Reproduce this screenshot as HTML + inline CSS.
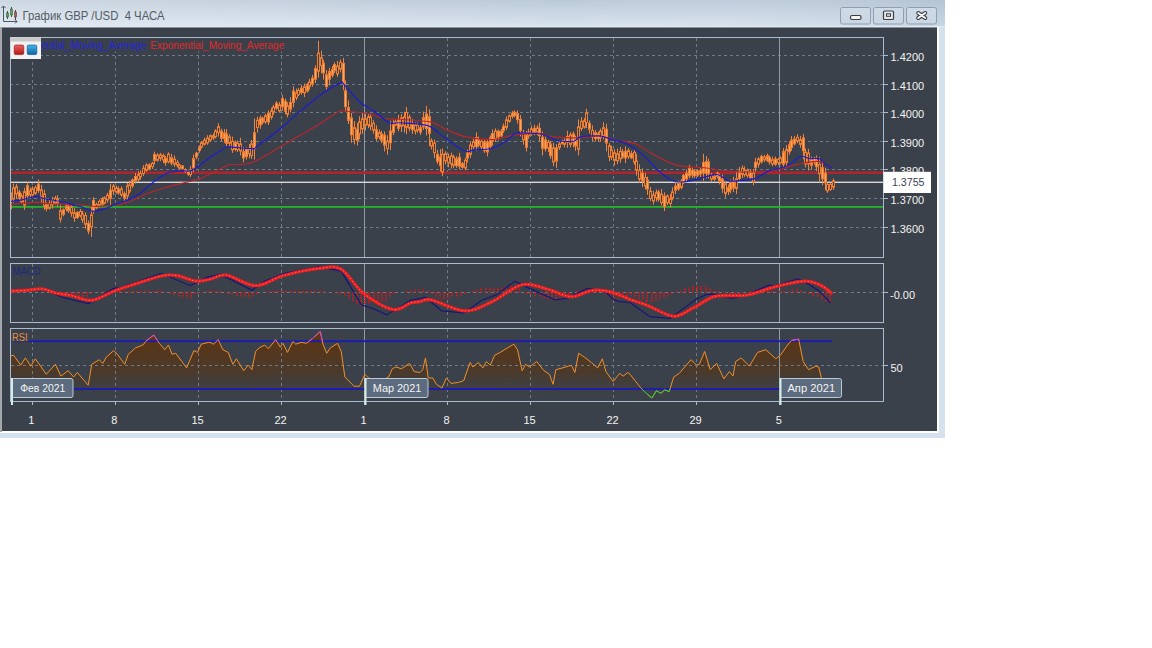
<!DOCTYPE html>
<html><head><meta charset="utf-8"><title>GBP/USD</title>
<style>
html,body{margin:0;padding:0;background:#fff;width:1152px;height:648px;overflow:hidden}
svg{position:absolute;left:0;top:0;display:block}
text{font-family:"Liberation Sans", sans-serif}
</style></head><body>
<svg width="1152" height="648" viewBox="0 0 1152 648">
<defs>
<linearGradient id="tb" x1="0" y1="0" x2="0" y2="1">
<stop offset="0" stop-color="#bccad8"/><stop offset="1" stop-color="#d8e3ef"/></linearGradient>
<linearGradient id="tbh" x1="0" y1="0" x2="1" y2="0">
<stop offset="0" stop-color="#ffffff" stop-opacity="0.25"/><stop offset="0.6" stop-color="#ffffff" stop-opacity="0"/><stop offset="1" stop-color="#9fb3c8" stop-opacity="0.25"/></linearGradient>
<linearGradient id="btn" x1="0" y1="0" x2="0" y2="1">
<stop offset="0" stop-color="#cfdbe7"/><stop offset="1" stop-color="#c9d6e3"/></linearGradient>
<linearGradient id="lr" x1="0" y1="0" x2="0" y2="1">
<stop offset="0" stop-color="#f06060"/><stop offset="1" stop-color="#b01818"/></linearGradient>
<linearGradient id="lb" x1="0" y1="0" x2="0" y2="1">
<stop offset="0" stop-color="#40b8f0"/><stop offset="1" stop-color="#1060a0"/></linearGradient>
<linearGradient id="rsif" gradientUnits="userSpaceOnUse" x1="0" y1="332" x2="0" y2="401">
<stop offset="0" stop-color="#5e3410"/><stop offset="0.6" stop-color="#4a3a2c"/><stop offset="1" stop-color="#3b414a" stop-opacity="0"/></linearGradient>
<clipPath id="cmain"><rect x="11" y="38" width="872" height="219"/></clipPath>
<clipPath id="cmacd"><rect x="11" y="264" width="872" height="58"/></clipPath>
<clipPath id="chi"><rect x="11" y="329" width="872" height="12"/></clipPath>
<clipPath id="clo"><rect x="11" y="389" width="872" height="12"/></clipPath>
<clipPath id="crsi"><rect x="11" y="329" width="872" height="72"/></clipPath>
</defs>

<rect x="0" y="0" width="945" height="438" fill="#d5e1ed"/>
<rect x="0" y="0" width="945" height="27" fill="url(#tb)"/>
<rect x="0" y="0" width="945" height="27" fill="url(#tbh)"/>
<rect x="0" y="26" width="945" height="1" fill="#e2e9f1"/>
<rect x="0" y="27" width="939" height="406" fill="#ffffff"/>
<rect x="0" y="27" width="2" height="405" fill="#a4a8ad"/>
<rect x="2" y="27" width="935" height="404" fill="#3b414a"/>
<rect x="2" y="27" width="935" height="1" fill="#8a9098"/>
<g stroke="#4a5866" fill="none" stroke-width="1">
<path d="M3.5,6 V21.5 H17"/><path d="M1.5,8 L3.5,6 L5.5,8"/><path d="M15,19.5 L17,21.5 L15,23.5"/>
</g>
<g stroke-width="1">
<line x1="7.5" y1="11" x2="7.5" y2="19" stroke="#3a5a3a"/><rect x="6.5" y="13" width="2" height="4" fill="#5a9a5a" stroke="#3a5a3a" stroke-width="0.6"/>
<line x1="11.5" y1="7" x2="11.5" y2="17" stroke="#3a5a3a"/><rect x="10.5" y="9" width="2" height="6" fill="#60a860" stroke="#3a5a3a" stroke-width="0.6"/>
<line x1="15.5" y1="10" x2="15.5" y2="20" stroke="#5a3a3a"/><rect x="14.5" y="12" width="2" height="5" fill="#9a6a5a" stroke="#5a3a3a" stroke-width="0.6"/>
</g>
<text x="22.5" y="20" font-size="12.5" fill="#545b63" xml:space="preserve" textLength="142" lengthAdjust="spacingAndGlyphs">График GBP /USD  4 ЧАСА</text>
<rect x="840.5" y="7.5" width="30" height="16.5" rx="2" fill="url(#btn)" stroke="#8e9fb1"/>
<rect x="873.5" y="7.5" width="30" height="16.5" rx="2" fill="url(#btn)" stroke="#8e9fb1"/>
<rect x="906.5" y="7.5" width="30" height="16.5" rx="2" fill="url(#btn)" stroke="#8e9fb1"/>
<rect x="850.5" y="15.5" width="10.5" height="4" rx="1.5" fill="#f4f4f4" stroke="#3a3f45" stroke-width="1.2"/>
<rect x="883.5" y="11" width="10" height="8.5" rx="1" fill="#e8e8e8" stroke="#3a3f45" stroke-width="1.2"/><rect x="886.5" y="13.8" width="4" height="2.5" fill="none" stroke="#3a3f45" stroke-width="1"/>
<path d="M918.2,13 L925.2,18 M925.2,13 L918.2,18" stroke="#3a3f45" stroke-width="4" stroke-linecap="round"/><path d="M918.2,13 L925.2,18 M925.2,13 L918.2,18" stroke="#f6f6f6" stroke-width="2" stroke-linecap="round"/>
<path clip-path="url(#crsi)" d="M10.7,356.1 L13.5,355.2 L20.8,365.2 L25.3,357.9 L30.8,366.1 L35.3,358.8 L46.3,374.3 L55.4,364.3 L60.9,376.1 L68.2,370.7 L73.6,377.0 L77.3,372.5 L88.2,385.2 L91.8,364.3 L99.1,359.7 L102.8,363.4 L106.4,357.0 L113.7,350.6 L117.4,354.3 L124.7,364.3 L128.3,354.3 L135.6,347.9 L142.9,345.1 L146.5,340.6 L153.8,335.1 L159.3,343.3 L164.8,349.7 L168.4,345.1 L172.1,354.3 L175.7,353.3 L186.6,367.9 L193.9,350.6 L197.6,352.4 L201.2,344.2 L208.5,342.4 L210.0,342.4 L213.6,344.2 L218.2,339.7 L222.8,349.7 L228.2,352.4 L232.8,364.3 L236.4,358.8 L243.7,370.7 L248.3,365.2 L251.9,369.7 L255.6,351.5 L259.2,347.9 L264.7,345.1 L268.3,348.8 L275.6,339.7 L280.2,347.0 L282.9,343.3 L287.5,352.4 L292.9,341.5 L295.7,344.2 L301.1,342.4 L306.6,343.3 L312.1,338.8 L320.3,331.5 L323.0,344.2 L326.7,353.3 L330.3,347.9 L337.6,343.3 L341.2,351.5 L344.9,377.0 L354.0,386.2 L359.5,386.2 L364.9,374.3 L368.6,378.0 L377.7,380.7 L385.0,378.9 L388.6,377.0 L392.3,368.8 L395.9,367.0 L401.4,368.8 L409.6,363.4 L414.2,371.6 L420.0,372.5 L422.7,369.7 L425.5,357.9 L428.2,378.0 L432.8,378.0 L436.4,384.3 L441.9,388.0 L446.4,378.0 L451.0,383.4 L458.3,382.5 L463.7,380.7 L470.1,362.5 L472.9,367.0 L478.3,362.5 L482.9,367.9 L486.5,361.5 L490.2,365.2 L494.7,355.2 L500.2,352.4 L507.5,347.9 L513.9,344.2 L517.5,349.7 L522.1,370.7 L525.7,364.3 L529.4,367.0 L536.7,361.5 L544.0,370.7 L549.4,374.3 L553.1,384.3 L555.8,369.7 L565.8,367.0 L571.3,365.2 L574.9,372.5 L578.6,353.3 L584.1,357.0 L591.3,362.5 L597.7,367.9 L602.3,358.8 L605.9,371.6 L613.2,381.6 L619.6,373.4 L623.2,376.1 L627.8,372.5 L630.0,374.3 L640.9,388.0 L646.4,393.4 L651.9,398.0 L656.4,390.7 L661.0,393.4 L664.6,389.8 L669.2,391.6 L673.7,377.0 L679.2,373.4 L684.7,367.0 L691.1,359.7 L696.5,365.2 L699.3,364.3 L704.7,351.5 L710.2,369.7 L716.6,363.4 L723.9,378.9 L729.3,371.6 L733.0,376.1 L735.7,361.5 L741.2,357.9 L749.4,366.1 L757.6,352.4 L765.8,349.7 L775.8,358.8 L780.4,355.2 L786.8,346.1 L791.3,340.6 L798.6,339.1 L803.2,361.5 L808.6,369.7 L815.9,366.1 L818.7,367.0 L821.4,378.0 L821.4,401 L10.7,401 Z" fill="url(#rsif)"/>
<line x1="11" y1="55.5" x2="883" y2="55.5" stroke="#6f7b87" stroke-dasharray="3,3" stroke-dashoffset="1"/>
<line x1="11" y1="84.5" x2="883" y2="84.5" stroke="#6f7b87" stroke-dasharray="3,3" stroke-dashoffset="1"/>
<line x1="11" y1="112.5" x2="883" y2="112.5" stroke="#6f7b87" stroke-dasharray="3,3" stroke-dashoffset="1"/>
<line x1="11" y1="141.5" x2="883" y2="141.5" stroke="#6f7b87" stroke-dasharray="3,3" stroke-dashoffset="1"/>
<line x1="11" y1="169.5" x2="883" y2="169.5" stroke="#6f7b87" stroke-dasharray="3,3" stroke-dashoffset="1"/>
<line x1="11" y1="198.5" x2="883" y2="198.5" stroke="#6f7b87" stroke-dasharray="3,3" stroke-dashoffset="1"/>
<line x1="11" y1="227.5" x2="883" y2="227.5" stroke="#6f7b87" stroke-dasharray="3,3" stroke-dashoffset="1"/>
<line x1="32.5" y1="38" x2="32.5" y2="257" stroke="#6f7b87" stroke-dasharray="3,3"/>
<line x1="32.5" y1="264" x2="32.5" y2="322" stroke="#6f7b87" stroke-dasharray="3,3"/>
<line x1="32.5" y1="329" x2="32.5" y2="401" stroke="#6f7b87" stroke-dasharray="3,3"/>
<line x1="115.5" y1="38" x2="115.5" y2="257" stroke="#6f7b87" stroke-dasharray="3,3"/>
<line x1="115.5" y1="264" x2="115.5" y2="322" stroke="#6f7b87" stroke-dasharray="3,3"/>
<line x1="115.5" y1="329" x2="115.5" y2="401" stroke="#6f7b87" stroke-dasharray="3,3"/>
<line x1="198.5" y1="38" x2="198.5" y2="257" stroke="#6f7b87" stroke-dasharray="3,3"/>
<line x1="198.5" y1="264" x2="198.5" y2="322" stroke="#6f7b87" stroke-dasharray="3,3"/>
<line x1="198.5" y1="329" x2="198.5" y2="401" stroke="#6f7b87" stroke-dasharray="3,3"/>
<line x1="281.5" y1="38" x2="281.5" y2="257" stroke="#6f7b87" stroke-dasharray="3,3"/>
<line x1="281.5" y1="264" x2="281.5" y2="322" stroke="#6f7b87" stroke-dasharray="3,3"/>
<line x1="281.5" y1="329" x2="281.5" y2="401" stroke="#6f7b87" stroke-dasharray="3,3"/>
<line x1="364.5" y1="38" x2="364.5" y2="257" stroke="#8d9aa8"/>
<line x1="364.5" y1="264" x2="364.5" y2="322" stroke="#8d9aa8"/>
<line x1="364.5" y1="329" x2="364.5" y2="401" stroke="#8d9aa8"/>
<line x1="447.5" y1="38" x2="447.5" y2="257" stroke="#6f7b87" stroke-dasharray="3,3"/>
<line x1="447.5" y1="264" x2="447.5" y2="322" stroke="#6f7b87" stroke-dasharray="3,3"/>
<line x1="447.5" y1="329" x2="447.5" y2="401" stroke="#6f7b87" stroke-dasharray="3,3"/>
<line x1="530.5" y1="38" x2="530.5" y2="257" stroke="#6f7b87" stroke-dasharray="3,3"/>
<line x1="530.5" y1="264" x2="530.5" y2="322" stroke="#6f7b87" stroke-dasharray="3,3"/>
<line x1="530.5" y1="329" x2="530.5" y2="401" stroke="#6f7b87" stroke-dasharray="3,3"/>
<line x1="613.5" y1="38" x2="613.5" y2="257" stroke="#6f7b87" stroke-dasharray="3,3"/>
<line x1="613.5" y1="264" x2="613.5" y2="322" stroke="#6f7b87" stroke-dasharray="3,3"/>
<line x1="613.5" y1="329" x2="613.5" y2="401" stroke="#6f7b87" stroke-dasharray="3,3"/>
<line x1="696.5" y1="38" x2="696.5" y2="257" stroke="#6f7b87" stroke-dasharray="3,3"/>
<line x1="696.5" y1="264" x2="696.5" y2="322" stroke="#6f7b87" stroke-dasharray="3,3"/>
<line x1="696.5" y1="329" x2="696.5" y2="401" stroke="#6f7b87" stroke-dasharray="3,3"/>
<line x1="779.5" y1="38" x2="779.5" y2="257" stroke="#8d9aa8"/>
<line x1="779.5" y1="264" x2="779.5" y2="322" stroke="#8d9aa8"/>
<line x1="779.5" y1="329" x2="779.5" y2="401" stroke="#8d9aa8"/>
<line x1="11" y1="292.5" x2="883" y2="292.5" stroke="#6f7b87" stroke-dasharray="3,3"/>
<line x1="11" y1="365.5" x2="883" y2="365.5" stroke="#6f7b87" stroke-dasharray="3,3"/>
<rect x="10.5" y="37.5" width="873" height="220.0" fill="none" stroke="#a9bccf"/>
<rect x="10.5" y="263.5" width="873" height="59.0" fill="none" stroke="#a9bccf"/>
<rect x="10.5" y="328.5" width="873" height="73.0" fill="none" stroke="#a9bccf"/>
<line x1="884" y1="55.5" x2="888" y2="55.5" stroke="#a9bccf"/>
<line x1="884" y1="84.5" x2="888" y2="84.5" stroke="#a9bccf"/>
<line x1="884" y1="112.5" x2="888" y2="112.5" stroke="#a9bccf"/>
<line x1="884" y1="141.5" x2="888" y2="141.5" stroke="#a9bccf"/>
<line x1="884" y1="169.5" x2="888" y2="169.5" stroke="#a9bccf"/>
<line x1="884" y1="198.5" x2="888" y2="198.5" stroke="#a9bccf"/>
<line x1="884" y1="227.5" x2="888" y2="227.5" stroke="#a9bccf"/>
<line x1="884" y1="292.5" x2="888" y2="292.5" stroke="#a9bccf"/>
<line x1="884" y1="365.5" x2="888" y2="365.5" stroke="#a9bccf"/>
<line x1="32.5" y1="402" x2="32.5" y2="405" stroke="#a9bccf"/>
<line x1="115.5" y1="402" x2="115.5" y2="405" stroke="#a9bccf"/>
<line x1="198.5" y1="402" x2="198.5" y2="405" stroke="#a9bccf"/>
<line x1="281.5" y1="402" x2="281.5" y2="405" stroke="#a9bccf"/>
<line x1="364.5" y1="402" x2="364.5" y2="405" stroke="#a9bccf"/>
<line x1="447.5" y1="402" x2="447.5" y2="405" stroke="#a9bccf"/>
<line x1="530.5" y1="402" x2="530.5" y2="405" stroke="#a9bccf"/>
<line x1="613.5" y1="402" x2="613.5" y2="405" stroke="#a9bccf"/>
<line x1="696.5" y1="402" x2="696.5" y2="405" stroke="#a9bccf"/>
<line x1="779.5" y1="402" x2="779.5" y2="405" stroke="#a9bccf"/>
<g clip-path="url(#cmain)">
<rect x="11" y="171.5" width="872" height="2.5" fill="#b0242c"/>
<rect x="11" y="181.6" width="872" height="1.4" fill="#d8d8d8"/>
<rect x="11" y="206" width="872" height="1.8" fill="#26b426"/>
<path d="M10.5,184.2V215.2M13.5,183.6V202.5M16.5,183.8V199.0M19.5,189.9V201.0M21.5,193.4V203.6M24.5,187.9V209.9M27.5,182.3V199.2M30.5,187.5V198.0M32.5,186.3V197.8M35.5,185.5V194.9M38.5,179.5V192.8M41.5,184.8V203.0M44.5,189.8V210.0M46.5,202.7V211.3M49.5,200.2V209.7M52.5,197.0V208.7M55.5,195.8V204.8M57.5,195.1V206.7M60.5,204.4V222.7M63.5,208.4V216.3M66.5,203.1V211.6M68.5,203.4V213.0M71.5,205.2V216.8M74.5,208.1V221.8M77.5,211.1V219.1M80.5,209.0V217.3M82.5,211.0V222.9M85.5,212.3V228.7M88.5,220.6V234.2M91.5,206.3V236.9M93.5,197.1V213.8M96.5,202.5V209.1M99.5,199.4V207.4M102.5,197.1V207.0M104.5,196.3V204.3M107.5,192.8V202.8M110.5,183.6V204.7M113.5,184.0V194.8M116.5,185.5V193.7M118.5,186.5V194.7M121.5,186.3V196.8M124.5,191.5V200.8M127.5,182.9V199.8M129.5,180.6V193.6M132.5,178.4V188.0M135.5,173.0V183.6M138.5,171.1V181.9M140.5,170.4V179.6M143.5,165.1V176.0M146.5,163.2V171.8M149.5,163.3V170.3M152.5,161.8V169.0M154.5,151.6V164.5M157.5,153.2V161.6M160.5,152.9V161.1M163.5,153.5V163.1M165.5,156.0V165.8M168.5,152.3V163.4M171.5,153.9V165.4M174.5,155.4V166.8M177.5,159.8V167.4M179.5,163.7V169.3M182.5,165.2V169.9M185.5,168.3V173.1M188.5,169.7V175.8M190.5,166.2V177.0M193.5,154.4V172.2M196.5,151.8V159.3M199.5,145.2V152.7M201.5,141.0V148.7M204.5,137.5V145.7M207.5,135.2V144.8M210.5,134.4V142.1M213.5,133.4V140.0M215.5,129.2V138.4M218.5,123.3V136.5M221.5,128.6V141.2M224.5,129.1V142.7M226.5,129.1V146.4M229.5,134.3V146.7M232.5,136.6V152.9M235.5,140.5V151.2M237.5,140.5V152.0M240.5,137.8V155.4M243.5,146.9V162.4M246.5,147.4V159.6M249.5,144.1V158.3M251.5,139.9V158.9M254.5,118.6V159.5M257.5,116.6V132.6M260.5,115.5V128.8M262.5,116.6V124.4M265.5,113.7V124.0M268.5,110.3V125.0M271.5,107.7V119.5M273.5,104.9V114.9M276.5,101.3V109.8M279.5,102.0V112.7M282.5,94.9V110.7M285.5,98.6V114.1M287.5,102.3V117.4M290.5,97.2V112.4M293.5,86.4V107.3M296.5,88.6V100.2M298.5,88.1V96.0M301.5,85.0V94.8M304.5,83.5V97.1M307.5,82.9V92.6M309.5,78.9V89.8M312.5,75.0V86.7M315.5,65.4V83.0M318.5,40.8V77.5M321.5,50.7V73.4M323.5,59.8V79.6M326.5,69.8V89.6M329.5,67.7V84.9M332.5,66.0V77.4M334.5,62.4V73.2M337.5,61.0V76.8M340.5,59.5V72.4M343.5,57.8V90.3M345.5,80.6V111.5M348.5,100.5V124.0M351.5,112.8V142.8M354.5,121.2V144.4M357.5,123.0V145.6M359.5,116.2V139.4M362.5,113.0V134.0M365.5,113.8V130.3M368.5,114.2V128.2M370.5,114.2V130.3M373.5,120.2V133.6M376.5,125.4V140.9M379.5,129.6V139.4M381.5,130.7V143.2M384.5,131.4V151.5M387.5,135.3V154.7M390.5,120.8V150.0M393.5,119.6V135.1M395.5,119.8V126.1M398.5,114.9V131.2M401.5,114.1V132.0M404.5,111.7V132.6M406.5,107.0V134.2M409.5,114.6V131.4M412.5,118.9V134.0M415.5,122.5V134.5M417.5,122.5V132.7M420.5,124.2V135.0M423.5,111.6V130.0M426.5,105.9V135.4M429.5,109.3V146.1M431.5,138.4V149.5M434.5,139.6V158.1M437.5,149.9V164.1M440.5,149.1V171.6M442.5,148.4V176.2M445.5,151.2V164.4M448.5,153.5V167.3M451.5,152.6V168.5M453.5,154.8V168.3M456.5,156.2V167.9M459.5,152.8V169.4M462.5,162.0V168.7M465.5,157.6V170.3M467.5,149.6V162.4M470.5,141.1V157.8M473.5,138.6V149.6M476.5,132.3V151.1M478.5,136.6V147.3M481.5,139.8V149.4M484.5,139.0V152.9M487.5,139.4V156.4M490.5,135.3V149.1M492.5,129.5V145.6M495.5,128.4V142.1M498.5,129.5V140.5M501.5,128.9V137.1M503.5,123.6V132.9M506.5,116.4V130.0M509.5,114.3V122.6M512.5,110.9V118.5M514.5,110.3V117.1M517.5,110.4V123.7M520.5,115.1V136.3M523.5,129.9V144.7M526.5,131.1V151.4M528.5,128.7V138.9M531.5,125.7V135.9M534.5,124.8V135.3M537.5,125.0V135.4M539.5,122.6V141.0M542.5,131.5V155.4M545.5,136.7V151.5M548.5,139.9V152.0M550.5,141.3V158.7M553.5,142.9V166.1M556.5,144.2V167.9M559.5,141.5V150.0M562.5,139.7V144.7M564.5,138.2V147.3M567.5,130.9V147.9M570.5,132.2V147.3M573.5,131.4V147.2M575.5,135.6V150.9M578.5,119.5V155.4M581.5,117.2V131.1M584.5,118.2V128.6M586.5,108.7V128.2M589.5,120.5V133.5M592.5,125.3V141.3M595.5,130.0V141.4M598.5,131.4V141.6M600.5,128.5V141.6M603.5,122.3V139.4M606.5,123.8V151.3M609.5,143.0V161.1M611.5,145.7V159.9M614.5,149.2V165.5M617.5,148.6V164.0M620.5,147.0V162.7M622.5,149.1V158.8M625.5,146.4V163.1M628.5,148.2V159.1M631.5,150.8V159.2M634.5,150.1V164.8M636.5,153.9V175.7M639.5,164.4V182.9M642.5,168.4V187.0M645.5,172.8V189.5M647.5,176.7V194.8M650.5,186.9V201.1M653.5,190.9V204.5M656.5,189.7V201.6M658.5,189.8V201.7M661.5,188.9V205.5M664.5,192.3V211.0M667.5,194.3V205.1M670.5,193.9V207.6M672.5,187.3V200.4M675.5,181.8V194.0M678.5,180.6V190.8M681.5,179.2V189.3M683.5,173.8V184.0M686.5,169.5V182.1M689.5,164.7V178.2M692.5,167.7V178.0M694.5,169.4V177.9M697.5,169.1V176.8M700.5,167.1V177.2M703.5,153.8V180.7M706.5,156.1V178.3M708.5,158.6V178.4M711.5,173.1V181.5M714.5,174.7V180.7M717.5,171.6V178.5M719.5,173.6V184.4M722.5,174.4V192.7M725.5,181.2V197.6M728.5,184.6V195.0M730.5,179.7V193.4M733.5,176.8V192.0M736.5,171.7V194.1M739.5,166.8V181.3M742.5,165.4V178.0M744.5,166.4V176.9M747.5,168.5V177.7M750.5,169.2V180.2M753.5,169.1V185.3M755.5,157.8V172.6M758.5,157.0V167.5M761.5,154.7V163.5M764.5,154.8V161.9M767.5,153.5V162.0M769.5,155.5V164.6M772.5,156.7V166.1M775.5,156.6V165.8M778.5,158.0V165.0M780.5,156.2V164.3M783.5,148.1V167.0M786.5,145.1V166.7M789.5,141.4V154.8M791.5,135.9V150.8M794.5,135.8V145.4M797.5,134.2V143.4M800.5,135.8V147.7M803.5,134.0V159.3M805.5,148.3V167.4M808.5,148.8V170.4M811.5,156.5V169.7M814.5,157.0V164.6M816.5,155.5V171.2M819.5,156.9V181.5M822.5,160.5V185.2M825.5,167.7V190.3M827.5,182.4V192.9M830.5,182.2V190.9M833.5,178.7V190.0" stroke="#f0843c" stroke-width="1" fill="none"/>
<g stroke="#f07c30" stroke-width="1"><rect x="9.5" y="192.9" width="2" height="15.8" fill="#f9a866"/><rect x="12.5" y="187.9" width="2" height="11.1" fill="#3b414a"/><rect x="15.5" y="186.7" width="2" height="7.2" fill="#3b414a"/><rect x="18.5" y="192.1" width="2" height="5.2" fill="#f9a866"/><rect x="20.5" y="195.9" width="2" height="5.9" fill="#3b414a"/><rect x="23.5" y="191.6" width="2" height="13.5" fill="#3b414a"/><rect x="26.5" y="185.6" width="2" height="10.1" fill="#f9a866"/><rect x="29.5" y="190.9" width="2" height="3.9" fill="#3b414a"/><rect x="31.5" y="189.0" width="2" height="5.9" fill="#3b414a"/><rect x="34.5" y="187.5" width="2" height="5.8" fill="#3b414a"/><rect x="37.5" y="184.1" width="2" height="6.4" fill="#f9a866"/><rect x="40.5" y="189.8" width="2" height="7.3" fill="#3b414a"/><rect x="43.5" y="193.9" width="2" height="12.0" fill="#3b414a"/><rect x="45.5" y="204.8" width="2" height="3.6" fill="#f9a866"/><rect x="48.5" y="203.3" width="2" height="5.0" fill="#3b414a"/><rect x="51.5" y="200.4" width="2" height="4.4" fill="#3b414a"/><rect x="54.5" y="198.2" width="2" height="5.2" fill="#3b414a"/><rect x="56.5" y="199.0" width="2" height="4.0" fill="#f9a866"/><rect x="59.5" y="210.7" width="2" height="8.4" fill="#3b414a"/><rect x="62.5" y="209.8" width="2" height="4.5" fill="#f9a866"/><rect x="65.5" y="205.9" width="2" height="3.1" fill="#f9a866"/><rect x="67.5" y="206.3" width="2" height="4.4" fill="#f9a866"/><rect x="70.5" y="207.0" width="2" height="6.2" fill="#3b414a"/><rect x="73.5" y="212.7" width="2" height="5.3" fill="#3b414a"/><rect x="76.5" y="212.5" width="2" height="5.0" fill="#f9a866"/><rect x="79.5" y="211.4" width="2" height="4.5" fill="#3b414a"/><rect x="81.5" y="214.1" width="2" height="5.7" fill="#3b414a"/><rect x="84.5" y="215.5" width="2" height="8.8" fill="#3b414a"/><rect x="87.5" y="223.5" width="2" height="7.5" fill="#f9a866"/><rect x="90.5" y="214.8" width="2" height="12.0" fill="#3b414a"/><rect x="92.5" y="200.4" width="2" height="10.1" fill="#f9a866"/><rect x="95.5" y="204.4" width="2" height="3.3" fill="#3b414a"/><rect x="98.5" y="201.4" width="2" height="3.8" fill="#3b414a"/><rect x="101.5" y="199.1" width="2" height="5.1" fill="#f9a866"/><rect x="103.5" y="197.9" width="2" height="5.2" fill="#3b414a"/><rect x="106.5" y="195.1" width="2" height="4.8" fill="#3b414a"/><rect x="109.5" y="190.1" width="2" height="8.3" fill="#f9a866"/><rect x="112.5" y="186.0" width="2" height="5.0" fill="#3b414a"/><rect x="115.5" y="188.1" width="2" height="4.0" fill="#3b414a"/><rect x="117.5" y="189.0" width="2" height="4.0" fill="#f9a866"/><rect x="120.5" y="188.9" width="2" height="6.0" fill="#3b414a"/><rect x="123.5" y="193.7" width="2" height="4.5" fill="#f9a866"/><rect x="126.5" y="185.9" width="2" height="10.0" fill="#3b414a"/><rect x="128.5" y="185.1" width="2" height="6.2" fill="#3b414a"/><rect x="131.5" y="179.9" width="2" height="5.9" fill="#f9a866"/><rect x="134.5" y="176.5" width="2" height="4.0" fill="#f9a866"/><rect x="137.5" y="174.7" width="2" height="4.8" fill="#3b414a"/><rect x="139.5" y="173.5" width="2" height="3.3" fill="#3b414a"/><rect x="142.5" y="168.2" width="2" height="5.4" fill="#3b414a"/><rect x="145.5" y="165.1" width="2" height="5.2" fill="#3b414a"/><rect x="148.5" y="164.8" width="2" height="4.0" fill="#f9a866"/><rect x="151.5" y="163.1" width="2" height="3.5" fill="#3b414a"/><rect x="153.5" y="154.4" width="2" height="6.0" fill="#f9a866"/><rect x="156.5" y="155.2" width="2" height="5.1" fill="#3b414a"/><rect x="159.5" y="154.7" width="2" height="3.6" fill="#3b414a"/><rect x="162.5" y="155.6" width="2" height="4.3" fill="#3b414a"/><rect x="164.5" y="158.3" width="2" height="4.4" fill="#f9a866"/><rect x="167.5" y="154.1" width="2" height="7.6" fill="#3b414a"/><rect x="170.5" y="157.7" width="2" height="5.3" fill="#f9a866"/><rect x="173.5" y="159.1" width="2" height="5.1" fill="#3b414a"/><rect x="176.5" y="162.4" width="2" height="2.9" fill="#3b414a"/><rect x="178.5" y="165.3" width="2" height="2.8" fill="#3b414a"/><rect x="181.5" y="165.9" width="2" height="2.6" fill="#f9a866"/><rect x="184.5" y="169.6" width="2" height="1.8" fill="#3b414a"/><rect x="187.5" y="170.9" width="2" height="3.4" fill="#f9a866"/><rect x="189.5" y="169.9" width="2" height="4.7" fill="#3b414a"/><rect x="192.5" y="158.6" width="2" height="9.2" fill="#f9a866"/><rect x="195.5" y="153.2" width="2" height="3.8" fill="#f9a866"/><rect x="198.5" y="147.6" width="2" height="2.9" fill="#f9a866"/><rect x="200.5" y="142.6" width="2" height="4.4" fill="#3b414a"/><rect x="203.5" y="140.0" width="2" height="4.3" fill="#3b414a"/><rect x="206.5" y="138.1" width="2" height="4.8" fill="#3b414a"/><rect x="209.5" y="135.6" width="2" height="4.5" fill="#3b414a"/><rect x="212.5" y="135.7" width="2" height="2.2" fill="#f9a866"/><rect x="214.5" y="131.0" width="2" height="5.8" fill="#3b414a"/><rect x="217.5" y="126.6" width="2" height="6.0" fill="#3b414a"/><rect x="220.5" y="131.1" width="2" height="7.2" fill="#f9a866"/><rect x="223.5" y="133.0" width="2" height="5.7" fill="#f9a866"/><rect x="225.5" y="134.0" width="2" height="9.4" fill="#f9a866"/><rect x="228.5" y="136.9" width="2" height="6.5" fill="#3b414a"/><rect x="231.5" y="141.4" width="2" height="8.4" fill="#3b414a"/><rect x="234.5" y="142.6" width="2" height="6.6" fill="#f9a866"/><rect x="236.5" y="143.5" width="2" height="6.0" fill="#3b414a"/><rect x="239.5" y="143.9" width="2" height="7.0" fill="#3b414a"/><rect x="242.5" y="151.7" width="2" height="6.3" fill="#f9a866"/><rect x="245.5" y="149.4" width="2" height="7.1" fill="#f9a866"/><rect x="248.5" y="148.6" width="2" height="4.9" fill="#3b414a"/><rect x="250.5" y="143.8" width="2" height="11.7" fill="#3b414a"/><rect x="253.5" y="132.7" width="2" height="15.9" fill="#f9a866"/><rect x="256.5" y="120.2" width="2" height="7.3" fill="#3b414a"/><rect x="259.5" y="118.2" width="2" height="6.6" fill="#f9a866"/><rect x="261.5" y="118.0" width="2" height="4.4" fill="#f9a866"/><rect x="264.5" y="115.7" width="2" height="6.0" fill="#3b414a"/><rect x="267.5" y="113.1" width="2" height="8.9" fill="#f9a866"/><rect x="270.5" y="111.0" width="2" height="6.2" fill="#3b414a"/><rect x="272.5" y="107.1" width="2" height="5.0" fill="#3b414a"/><rect x="275.5" y="103.1" width="2" height="5.1" fill="#f9a866"/><rect x="278.5" y="104.8" width="2" height="6.1" fill="#3b414a"/><rect x="281.5" y="98.5" width="2" height="8.1" fill="#f9a866"/><rect x="284.5" y="101.2" width="2" height="10.1" fill="#f9a866"/><rect x="286.5" y="105.8" width="2" height="8.5" fill="#3b414a"/><rect x="289.5" y="102.4" width="2" height="6.8" fill="#f9a866"/><rect x="292.5" y="91.0" width="2" height="11.4" fill="#f9a866"/><rect x="295.5" y="92.7" width="2" height="4.9" fill="#3b414a"/><rect x="297.5" y="90.4" width="2" height="4.1" fill="#3b414a"/><rect x="300.5" y="88.2" width="2" height="4.3" fill="#f9a866"/><rect x="303.5" y="86.7" width="2" height="6.0" fill="#3b414a"/><rect x="306.5" y="84.7" width="2" height="6.4" fill="#f9a866"/><rect x="308.5" y="81.9" width="2" height="4.3" fill="#3b414a"/><rect x="311.5" y="78.2" width="2" height="5.9" fill="#f9a866"/><rect x="314.5" y="68.5" width="2" height="10.8" fill="#f9a866"/><rect x="317.5" y="53.1" width="2" height="18.1" fill="#3b414a"/><rect x="320.5" y="57.7" width="2" height="7.9" fill="#3b414a"/><rect x="322.5" y="63.2" width="2" height="9.7" fill="#f9a866"/><rect x="325.5" y="74.7" width="2" height="11.8" fill="#f9a866"/><rect x="328.5" y="71.6" width="2" height="7.6" fill="#f9a866"/><rect x="331.5" y="69.5" width="2" height="5.7" fill="#f9a866"/><rect x="333.5" y="64.5" width="2" height="6.2" fill="#f9a866"/><rect x="336.5" y="66.0" width="2" height="7.9" fill="#3b414a"/><rect x="339.5" y="62.5" width="2" height="6.7" fill="#3b414a"/><rect x="342.5" y="63.4" width="2" height="20.3" fill="#f9a866"/><rect x="344.5" y="90.8" width="2" height="15.8" fill="#f9a866"/><rect x="347.5" y="107.6" width="2" height="12.7" fill="#f9a866"/><rect x="350.5" y="118.0" width="2" height="16.7" fill="#f9a866"/><rect x="353.5" y="127.6" width="2" height="11.9" fill="#3b414a"/><rect x="356.5" y="129.1" width="2" height="11.2" fill="#f9a866"/><rect x="358.5" y="121.8" width="2" height="12.1" fill="#3b414a"/><rect x="361.5" y="118.7" width="2" height="10.1" fill="#3b414a"/><rect x="364.5" y="118.8" width="2" height="6.5" fill="#3b414a"/><rect x="367.5" y="116.8" width="2" height="8.0" fill="#3b414a"/><rect x="369.5" y="117.0" width="2" height="9.4" fill="#3b414a"/><rect x="372.5" y="123.4" width="2" height="6.8" fill="#3b414a"/><rect x="375.5" y="129.7" width="2" height="8.6" fill="#f9a866"/><rect x="378.5" y="132.6" width="2" height="4.3" fill="#3b414a"/><rect x="380.5" y="133.9" width="2" height="6.5" fill="#f9a866"/><rect x="383.5" y="135.0" width="2" height="10.1" fill="#f9a866"/><rect x="386.5" y="141.0" width="2" height="7.6" fill="#3b414a"/><rect x="389.5" y="130.9" width="2" height="11.8" fill="#f9a866"/><rect x="392.5" y="124.8" width="2" height="7.5" fill="#f9a866"/><rect x="394.5" y="121.9" width="2" height="3.1" fill="#3b414a"/><rect x="397.5" y="119.8" width="2" height="8.5" fill="#f9a866"/><rect x="400.5" y="117.8" width="2" height="8.6" fill="#3b414a"/><rect x="403.5" y="116.9" width="2" height="8.7" fill="#3b414a"/><rect x="405.5" y="112.5" width="2" height="14.9" fill="#3b414a"/><rect x="408.5" y="117.2" width="2" height="11.0" fill="#3b414a"/><rect x="411.5" y="124.0" width="2" height="5.7" fill="#f9a866"/><rect x="414.5" y="124.7" width="2" height="6.2" fill="#3b414a"/><rect x="416.5" y="125.2" width="2" height="4.8" fill="#3b414a"/><rect x="419.5" y="127.7" width="2" height="4.4" fill="#f9a866"/><rect x="422.5" y="117.6" width="2" height="9.3" fill="#f9a866"/><rect x="425.5" y="114.0" width="2" height="14.6" fill="#f9a866"/><rect x="428.5" y="116.8" width="2" height="16.5" fill="#f9a866"/><rect x="430.5" y="140.8" width="2" height="5.3" fill="#3b414a"/><rect x="433.5" y="143.1" width="2" height="9.5" fill="#3b414a"/><rect x="436.5" y="154.4" width="2" height="6.9" fill="#f9a866"/><rect x="439.5" y="156.9" width="2" height="8.7" fill="#f9a866"/><rect x="441.5" y="154.3" width="2" height="17.7" fill="#3b414a"/><rect x="444.5" y="153.6" width="2" height="7.2" fill="#3b414a"/><rect x="447.5" y="157.0" width="2" height="5.8" fill="#3b414a"/><rect x="450.5" y="155.7" width="2" height="8.3" fill="#3b414a"/><rect x="452.5" y="156.8" width="2" height="8.5" fill="#3b414a"/><rect x="455.5" y="158.8" width="2" height="6.9" fill="#f9a866"/><rect x="458.5" y="157.2" width="2" height="9.0" fill="#f9a866"/><rect x="461.5" y="163.6" width="2" height="3.8" fill="#f9a866"/><rect x="464.5" y="160.2" width="2" height="7.8" fill="#3b414a"/><rect x="466.5" y="153.1" width="2" height="5.1" fill="#f9a866"/><rect x="469.5" y="145.0" width="2" height="9.4" fill="#3b414a"/><rect x="472.5" y="141.7" width="2" height="5.0" fill="#3b414a"/><rect x="475.5" y="137.5" width="2" height="9.0" fill="#f9a866"/><rect x="477.5" y="139.8" width="2" height="5.4" fill="#f9a866"/><rect x="480.5" y="141.3" width="2" height="5.7" fill="#3b414a"/><rect x="483.5" y="141.7" width="2" height="9.0" fill="#f9a866"/><rect x="486.5" y="142.0" width="2" height="9.9" fill="#f9a866"/><rect x="489.5" y="137.7" width="2" height="8.7" fill="#f9a866"/><rect x="491.5" y="133.5" width="2" height="7.6" fill="#f9a866"/><rect x="494.5" y="131.0" width="2" height="8.3" fill="#3b414a"/><rect x="497.5" y="131.2" width="2" height="5.7" fill="#f9a866"/><rect x="500.5" y="131.3" width="2" height="4.5" fill="#f9a866"/><rect x="502.5" y="126.4" width="2" height="4.3" fill="#f9a866"/><rect x="505.5" y="119.7" width="2" height="7.7" fill="#3b414a"/><rect x="508.5" y="116.0" width="2" height="5.3" fill="#3b414a"/><rect x="511.5" y="113.2" width="2" height="3.1" fill="#f9a866"/><rect x="513.5" y="112.3" width="2" height="3.4" fill="#f9a866"/><rect x="516.5" y="113.6" width="2" height="6.0" fill="#f9a866"/><rect x="519.5" y="119.5" width="2" height="11.0" fill="#f9a866"/><rect x="522.5" y="132.7" width="2" height="7.1" fill="#3b414a"/><rect x="525.5" y="135.2" width="2" height="12.2" fill="#f9a866"/><rect x="527.5" y="132.1" width="2" height="3.7" fill="#3b414a"/><rect x="530.5" y="129.0" width="2" height="4.7" fill="#3b414a"/><rect x="533.5" y="128.3" width="2" height="4.1" fill="#f9a866"/><rect x="536.5" y="127.9" width="2" height="3.9" fill="#3b414a"/><rect x="538.5" y="128.5" width="2" height="7.2" fill="#f9a866"/><rect x="541.5" y="137.2" width="2" height="11.1" fill="#f9a866"/><rect x="544.5" y="139.9" width="2" height="8.8" fill="#f9a866"/><rect x="547.5" y="141.9" width="2" height="6.1" fill="#3b414a"/><rect x="549.5" y="144.0" width="2" height="11.7" fill="#f9a866"/><rect x="552.5" y="147.9" width="2" height="14.0" fill="#3b414a"/><rect x="555.5" y="147.9" width="2" height="13.1" fill="#f9a866"/><rect x="558.5" y="143.9" width="2" height="3.5" fill="#3b414a"/><rect x="561.5" y="141.0" width="2" height="2.5" fill="#f9a866"/><rect x="563.5" y="141.0" width="2" height="3.3" fill="#3b414a"/><rect x="566.5" y="136.4" width="2" height="5.8" fill="#f9a866"/><rect x="569.5" y="134.8" width="2" height="9.6" fill="#3b414a"/><rect x="572.5" y="133.9" width="2" height="8.3" fill="#f9a866"/><rect x="574.5" y="139.8" width="2" height="6.2" fill="#f9a866"/><rect x="577.5" y="126.9" width="2" height="22.4" fill="#3b414a"/><rect x="580.5" y="121.4" width="2" height="7.1" fill="#3b414a"/><rect x="583.5" y="120.6" width="2" height="6.4" fill="#3b414a"/><rect x="585.5" y="112.7" width="2" height="9.8" fill="#3b414a"/><rect x="588.5" y="123.3" width="2" height="5.8" fill="#f9a866"/><rect x="591.5" y="130.4" width="2" height="6.5" fill="#3b414a"/><rect x="594.5" y="132.6" width="2" height="6.0" fill="#f9a866"/><rect x="597.5" y="133.6" width="2" height="5.0" fill="#f9a866"/><rect x="599.5" y="131.0" width="2" height="6.4" fill="#3b414a"/><rect x="602.5" y="127.6" width="2" height="8.6" fill="#3b414a"/><rect x="605.5" y="129.1" width="2" height="13.9" fill="#f9a866"/><rect x="608.5" y="145.8" width="2" height="10.9" fill="#3b414a"/><rect x="610.5" y="150.1" width="2" height="7.1" fill="#3b414a"/><rect x="613.5" y="152.8" width="2" height="7.6" fill="#3b414a"/><rect x="616.5" y="153.8" width="2" height="7.0" fill="#3b414a"/><rect x="619.5" y="151.5" width="2" height="7.3" fill="#3b414a"/><rect x="621.5" y="151.8" width="2" height="5.4" fill="#f9a866"/><rect x="624.5" y="151.3" width="2" height="6.7" fill="#f9a866"/><rect x="627.5" y="150.6" width="2" height="6.0" fill="#3b414a"/><rect x="630.5" y="153.6" width="2" height="4.2" fill="#f9a866"/><rect x="633.5" y="152.4" width="2" height="9.6" fill="#3b414a"/><rect x="635.5" y="161.1" width="2" height="9.1" fill="#3b414a"/><rect x="638.5" y="170.4" width="2" height="8.8" fill="#3b414a"/><rect x="641.5" y="173.1" width="2" height="8.2" fill="#f9a866"/><rect x="644.5" y="177.5" width="2" height="8.4" fill="#3b414a"/><rect x="646.5" y="180.0" width="2" height="9.1" fill="#f9a866"/><rect x="649.5" y="191.2" width="2" height="7.3" fill="#3b414a"/><rect x="652.5" y="195.0" width="2" height="5.9" fill="#3b414a"/><rect x="655.5" y="192.6" width="2" height="5.1" fill="#3b414a"/><rect x="657.5" y="192.0" width="2" height="7.2" fill="#f9a866"/><rect x="660.5" y="194.2" width="2" height="8.3" fill="#3b414a"/><rect x="663.5" y="196.0" width="2" height="10.9" fill="#f9a866"/><rect x="666.5" y="196.2" width="2" height="6.5" fill="#3b414a"/><rect x="669.5" y="198.6" width="2" height="4.9" fill="#3b414a"/><rect x="671.5" y="191.8" width="2" height="6.4" fill="#3b414a"/><rect x="674.5" y="186.0" width="2" height="4.2" fill="#f9a866"/><rect x="677.5" y="183.1" width="2" height="5.8" fill="#f9a866"/><rect x="680.5" y="181.0" width="2" height="6.4" fill="#3b414a"/><rect x="682.5" y="175.4" width="2" height="6.2" fill="#f9a866"/><rect x="685.5" y="173.1" width="2" height="5.8" fill="#f9a866"/><rect x="688.5" y="168.0" width="2" height="7.8" fill="#f9a866"/><rect x="691.5" y="170.1" width="2" height="4.9" fill="#f9a866"/><rect x="693.5" y="171.4" width="2" height="4.2" fill="#f9a866"/><rect x="696.5" y="170.9" width="2" height="4.4" fill="#f9a866"/><rect x="699.5" y="170.4" width="2" height="3.7" fill="#f9a866"/><rect x="702.5" y="162.5" width="2" height="10.6" fill="#f9a866"/><rect x="705.5" y="161.4" width="2" height="12.1" fill="#f9a866"/><rect x="707.5" y="162.0" width="2" height="11.8" fill="#f9a866"/><rect x="710.5" y="175.5" width="2" height="3.6" fill="#3b414a"/><rect x="713.5" y="176.1" width="2" height="3.2" fill="#f9a866"/><rect x="716.5" y="173.2" width="2" height="3.3" fill="#f9a866"/><rect x="718.5" y="175.6" width="2" height="5.7" fill="#f9a866"/><rect x="721.5" y="178.6" width="2" height="9.6" fill="#f9a866"/><rect x="724.5" y="183.8" width="2" height="9.6" fill="#3b414a"/><rect x="727.5" y="187.8" width="2" height="3.7" fill="#f9a866"/><rect x="729.5" y="182.1" width="2" height="7.7" fill="#f9a866"/><rect x="732.5" y="181.3" width="2" height="6.9" fill="#f9a866"/><rect x="735.5" y="178.8" width="2" height="9.6" fill="#3b414a"/><rect x="738.5" y="171.7" width="2" height="6.8" fill="#f9a866"/><rect x="741.5" y="168.3" width="2" height="5.9" fill="#3b414a"/><rect x="743.5" y="170.0" width="2" height="4.6" fill="#3b414a"/><rect x="746.5" y="170.4" width="2" height="5.2" fill="#3b414a"/><rect x="749.5" y="171.8" width="2" height="5.9" fill="#f9a866"/><rect x="752.5" y="172.7" width="2" height="9.4" fill="#3b414a"/><rect x="754.5" y="162.2" width="2" height="5.4" fill="#f9a866"/><rect x="757.5" y="159.0" width="2" height="5.2" fill="#3b414a"/><rect x="760.5" y="156.4" width="2" height="5.6" fill="#f9a866"/><rect x="763.5" y="157.0" width="2" height="2.9" fill="#3b414a"/><rect x="766.5" y="155.8" width="2" height="4.6" fill="#f9a866"/><rect x="768.5" y="157.5" width="2" height="4.5" fill="#f9a866"/><rect x="771.5" y="159.7" width="2" height="4.2" fill="#3b414a"/><rect x="774.5" y="159.0" width="2" height="5.2" fill="#f9a866"/><rect x="777.5" y="159.5" width="2" height="3.2" fill="#3b414a"/><rect x="779.5" y="158.0" width="2" height="4.6" fill="#3b414a"/><rect x="782.5" y="151.6" width="2" height="12.5" fill="#f9a866"/><rect x="785.5" y="149.6" width="2" height="12.8" fill="#3b414a"/><rect x="788.5" y="144.7" width="2" height="7.0" fill="#f9a866"/><rect x="790.5" y="140.1" width="2" height="7.4" fill="#f9a866"/><rect x="793.5" y="138.9" width="2" height="5.0" fill="#f9a866"/><rect x="796.5" y="137.3" width="2" height="3.3" fill="#3b414a"/><rect x="799.5" y="139.6" width="2" height="4.8" fill="#3b414a"/><rect x="802.5" y="137.9" width="2" height="12.9" fill="#f9a866"/><rect x="804.5" y="152.1" width="2" height="12.0" fill="#3b414a"/><rect x="807.5" y="153.0" width="2" height="10.8" fill="#3b414a"/><rect x="810.5" y="158.9" width="2" height="6.4" fill="#f9a866"/><rect x="813.5" y="158.4" width="2" height="3.7" fill="#f9a866"/><rect x="815.5" y="160.3" width="2" height="6.4" fill="#f9a866"/><rect x="818.5" y="164.5" width="2" height="9.2" fill="#3b414a"/><rect x="821.5" y="167.7" width="2" height="11.2" fill="#f9a866"/><rect x="824.5" y="173.0" width="2" height="9.9" fill="#f9a866"/><rect x="826.5" y="184.5" width="2" height="6.3" fill="#3b414a"/><rect x="829.5" y="184.4" width="2" height="5.1" fill="#3b414a"/><rect x="832.5" y="180.7" width="2" height="6.5" fill="#3b414a"/></g>
<path d="M10.0,204.6 C14.2,204.2 29.0,202.6 35.0,202.4 C41.0,202.2 38.8,203.1 46.0,203.5 C53.2,203.9 69.8,204.3 78.0,204.8 C86.2,205.3 89.3,206.4 95.0,206.5 C100.7,206.6 106.7,206.2 112.0,205.5 C117.3,204.8 121.2,204.3 127.0,202.4 C132.8,200.5 140.7,196.3 146.9,193.8 C153.1,191.4 158.5,189.5 164.2,187.7 C170.0,186.0 175.8,184.8 181.6,183.4 C187.4,182.0 195.9,179.8 199.0,179.1 C202.0,178.3 196.1,180.9 200.0,179.0 C203.9,177.1 217.7,170.1 222.6,167.7 C227.5,165.4 224.6,165.7 229.5,164.8 C234.4,163.9 243.4,165.7 252.1,162.5 C260.8,159.4 272.9,151.0 281.6,146.0 C290.3,141.1 297.5,136.9 304.2,133.0 C310.8,129.1 315.7,126.4 321.5,122.8 C327.3,119.2 334.3,113.4 338.9,111.5 C343.5,109.6 344.7,111.2 349.3,111.5 C353.9,111.8 362.6,112.7 366.7,113.3 C370.7,113.8 370.7,114.1 373.6,115.0 C376.5,115.9 379.7,117.7 384.0,118.5 C388.4,119.2 391.8,118.7 399.7,119.3 C407.5,119.9 423.7,120.5 431.2,122.1 C438.8,123.7 439.4,126.6 445.1,129.1 C450.9,131.5 457.9,135.1 466.0,136.9 C474.1,138.6 485.9,139.8 493.8,139.5 C501.6,139.2 505.3,136.2 512.8,135.1 C520.4,134.1 532.2,133.1 538.9,133.4 C545.5,133.7 545.8,136.2 552.8,136.9 C559.7,137.6 572.7,137.9 580.6,137.7 C588.4,137.6 593.5,135.5 599.7,136.0 C605.8,136.5 611.5,139.6 617.4,140.8 C623.2,142.0 628.9,141.2 634.7,143.4 C640.5,145.6 645.1,150.2 652.1,153.8 C659.0,157.4 667.7,162.8 676.4,165.1 C685.1,167.4 695.5,166.7 704.2,167.7 C712.8,168.7 719.8,170.5 728.5,171.2 C737.2,171.9 749.6,172.1 756.2,172.0 C762.9,172.0 764.5,171.5 768.3,171.1 C772.2,170.7 776.2,170.4 779.4,169.7 C782.7,169.0 784.1,168.0 787.8,166.9 C791.5,165.9 796.6,164.4 801.7,163.5 C806.8,162.5 814.6,161.4 818.3,161.4 C822.0,161.4 821.6,162.3 823.9,163.5 C826.2,164.6 830.8,167.5 832.2,168.3" stroke="#b8262c" stroke-width="1.15" fill="none"/>
<path d="M9.7,201.6 C11.8,201.3 17.5,200.8 21.9,199.9 C26.2,199.0 32.3,196.7 35.8,196.4 C39.2,196.1 39.2,197.4 42.7,198.2 C46.2,198.9 52.3,199.9 56.6,200.8 C61.0,201.6 64.7,202.4 68.8,203.4 C72.8,204.4 77.4,205.7 80.9,206.8 C84.4,208.0 87.3,209.6 89.6,210.3 C91.9,211.0 92.2,211.5 94.8,211.2 C97.4,210.9 101.8,209.7 105.2,208.6 C108.7,207.4 112.2,205.5 115.6,204.2 C119.1,202.9 122.0,202.6 126.1,200.8 C130.1,199.0 135.3,196.7 139.9,193.5 C144.6,190.3 149.2,185.1 153.8,181.7 C158.5,178.3 163.1,174.8 167.7,173.0 C172.4,171.2 177.8,171.2 181.6,170.9 C185.4,170.6 187.4,171.7 190.3,170.9 C193.2,170.1 197.4,167.0 199.0,166.0 C200.6,165.1 198.1,166.6 200.0,165.1 C201.9,163.7 206.7,159.9 210.4,157.3 C214.2,154.7 219.7,151.2 222.6,149.5 C225.5,147.8 222.9,147.1 227.8,146.9 C232.7,146.8 247.2,148.8 252.1,148.6 C257.0,148.5 252.4,149.5 257.3,146.0 C262.2,142.6 274.7,133.4 281.6,127.8 C288.5,122.2 292.3,118.0 299.0,112.4 C305.6,106.8 314.6,99.1 321.5,94.2 C328.5,89.2 336.9,84.5 340.6,82.9 C344.4,81.3 340.9,81.4 344.1,84.6 C347.3,87.8 354.8,97.6 359.7,102.0 C364.6,106.3 368.7,107.2 373.6,110.7 C378.5,114.1 384.9,120.8 389.2,122.8 C393.6,124.8 393.2,122.3 399.7,122.8 C406.1,123.3 420.5,123.2 427.8,125.6 C435.1,127.9 437.3,132.7 443.4,136.9 C449.5,141.1 459.0,148.6 464.2,150.8 C469.4,152.9 470.0,150.3 474.7,149.9 C479.3,149.5 486.5,149.8 492.0,148.2 C497.5,146.6 503.6,142.8 507.6,140.3 C511.7,137.9 510.5,134.4 516.3,133.4 C522.1,132.4 535.7,133.1 542.4,134.3 C549.0,135.4 551.0,139.2 556.2,140.3 C561.5,141.5 569.6,141.8 573.6,141.2 C577.7,140.6 576.2,137.7 580.6,136.9 C584.9,136.0 594.7,135.6 599.7,136.0 C604.6,136.4 605.7,137.7 610.4,139.1 C615.1,140.4 622.3,141.5 627.8,144.3 C633.3,147.0 638.2,151.1 643.4,155.6 C648.6,160.0 654.1,167.0 659.0,171.2 C663.9,175.4 668.3,179.0 672.9,180.7 C677.5,182.5 681.0,182.3 686.8,181.6 C692.6,180.9 702.4,177.5 707.6,176.4 C712.8,175.2 714.6,173.9 718.1,174.7 C721.5,175.4 725.0,179.7 728.5,180.7 C731.9,181.7 734.3,181.2 738.9,180.7 C743.5,180.3 751.3,179.7 756.2,178.1 C761.2,176.5 764.5,172.7 768.3,171.1 C772.2,169.5 776.2,169.3 779.4,168.3 C782.7,167.4 784.5,167.4 787.8,165.6 C791.0,163.7 796.3,158.7 798.9,157.2 C801.4,155.7 801.2,156.3 803.1,156.5 C804.9,156.8 807.2,158.3 810.0,158.6 C812.8,159.0 817.2,157.7 819.7,158.6 C822.3,159.5 823.2,162.5 825.3,164.2 C827.4,165.8 831.1,167.6 832.2,168.3" stroke="#1c1cd0" stroke-width="1.15" fill="none"/>
</g>
<text x="890.5" y="61.3" font-size="11" fill="#f2f2f2">1.4200</text>
<text x="890.5" y="90.3" font-size="11" fill="#f2f2f2">1.4100</text>
<text x="890.5" y="118.3" font-size="11" fill="#f2f2f2">1.4000</text>
<text x="890.5" y="147.3" font-size="11" fill="#f2f2f2">1.3900</text>
<text x="890.5" y="175.3" font-size="11" fill="#f2f2f2">1.3800</text>
<text x="890.5" y="204.3" font-size="11" fill="#f2f2f2">1.3700</text>
<text x="890.5" y="233.3" font-size="11" fill="#f2f2f2">1.3600</text>
<rect x="883.5" y="171.8" width="47.5" height="21.2" fill="#ffffff"/>
<text x="892" y="186.3" font-size="11" fill="#3a3f5a" textLength="32.5" lengthAdjust="spacingAndGlyphs">1.3755</text>
<rect x="11" y="38" width="275" height="13.5" fill="#3b414a"/>
<text x="12" y="49.3" font-size="11.5" fill="#2424e0" textLength="134" lengthAdjust="spacingAndGlyphs">Exponential_Moving_Average</text>
<text x="150.3" y="49.3" font-size="11.5" fill="#e02828" textLength="134" lengthAdjust="spacingAndGlyphs">Exponential_Moving_Average</text>
<rect x="10.5" y="37.5" width="30.5" height="21.5" fill="#f2f2f2"/>
<rect x="10.5" y="37.5" width="30.5" height="4" fill="#c9c9c9"/>
<rect x="14.2" y="45" width="9.6" height="9.6" rx="1.5" fill="url(#lr)" stroke="#901010" stroke-width="0.6"/>
<rect x="27.2" y="45" width="9.6" height="9.6" rx="1.5" fill="url(#lb)" stroke="#0a4a80" stroke-width="0.6"/>
<g clip-path="url(#cmacd)">
<path d="M54,292.5V293.5M58,292.5V294.4M62,292.5V295.6M66,292.5V296.1M71,292.5V296.4M75,292.5V296.5M79,292.5V296.5M83,292.5V296.6M87,292.5V296.6M91,292.5V294.4M104,292.5V291.6M108,292.5V290.9M112,292.5V290.1M116,292.5V290.2M120,292.5V291.1M125,292.5V291.2M129,292.5V291.1M133,292.5V291.0M137,292.5V290.9M141,292.5V290.7M145,292.5V290.5M149,292.5V290.2M154,292.5V290.0M158,292.5V289.8M162,292.5V289.8M170,292.5V293.8M174,292.5V295.5M179,292.5V297.2M183,292.5V297.7M187,292.5V298.2M191,292.5V298.6M195,292.5V295.2M199,292.5V293.2M203,292.5V291.7M208,292.5V290.1M212,292.5V289.8M216,292.5V290.1M220,292.5V290.3M228,292.5V294.8M232,292.5V295.4M237,292.5V296.0M241,292.5V296.6M245,292.5V297.3M249,292.5V297.9M253,292.5V297.5M257,292.5V294.0M266,292.5V291.3M270,292.5V291.2M274,292.5V291.1M278,292.5V291.0M282,292.5V290.9M286,292.5V290.5M291,292.5V290.5M295,292.5V290.5M299,292.5V290.6M303,292.5V290.6M307,292.5V290.6M311,292.5V290.6M315,292.5V290.7M320,292.5V290.7M324,292.5V291.3M336,292.5V293.4M340,292.5V294.1M345,292.5V296.0M349,292.5V298.5M353,292.5V300.9M357,292.5V303.4M361,292.5V305.9M365,292.5V304.6M369,292.5V303.6M374,292.5V302.6M378,292.5V302.1M382,292.5V301.6M386,292.5V301.2M390,292.5V297.7M394,292.5V294.2M407,292.5V290.9M411,292.5V289.8M415,292.5V289.6M419,292.5V289.4M423,292.5V289.3M428,292.5V290.7M432,292.5V294.7M436,292.5V296.7M440,292.5V298.8M444,292.5V299.6M448,292.5V298.7M452,292.5V297.8M457,292.5V296.9M461,292.5V296.0M465,292.5V294.7M473,292.5V291.0M477,292.5V289.5M481,292.5V288.1M486,292.5V287.7M490,292.5V287.6M494,292.5V287.6M498,292.5V288.0M502,292.5V287.2M506,292.5V286.4M511,292.5V285.7M515,292.5V284.9M519,292.5V288.5M527,292.5V294.0M531,292.5V295.2M535,292.5V296.3M540,292.5V297.5M544,292.5V298.6M548,292.5V299.7M552,292.5V300.2M556,292.5V300.2M560,292.5V298.1M564,292.5V296.1M569,292.5V294.1M577,292.5V290.3M581,292.5V289.8M585,292.5V289.3M589,292.5V289.5M594,292.5V291.7M610,292.5V296.4M614,292.5V299.0M618,292.5V298.8M623,292.5V298.1M627,292.5V296.8M631,292.5V295.7M635,292.5V297.2M639,292.5V298.7M643,292.5V300.2M647,292.5V301.7M652,292.5V302.3M656,292.5V301.0M660,292.5V299.7M664,292.5V298.3M668,292.5V297.0M672,292.5V294.2M677,292.5V291.2M681,292.5V289.9M685,292.5V288.6M689,292.5V287.3M693,292.5V286.0M697,292.5V285.4M701,292.5V285.8M706,292.5V286.2M710,292.5V287.8M714,292.5V290.0M718,292.5V290.5M722,292.5V291.8M726,292.5V293.2M730,292.5V294.5M735,292.5V294.8M739,292.5V294.0M743,292.5V293.2M751,292.5V291.4M755,292.5V290.9M760,292.5V290.3M764,292.5V289.8M768,292.5V289.2M772,292.5V290.1M776,292.5V291.5M780,292.5V291.1M784,292.5V290.5M789,292.5V290.0M793,292.5V289.5M797,292.5V288.9M801,292.5V290.5M805,292.5V293.2M809,292.5V294.7M813,292.5V296.2M818,292.5V297.6M822,292.5V299.8M826,292.5V301.3M830,292.5V302.7" stroke="#c41e1e" stroke-width="2" fill="none" stroke-dasharray="1.6,0.9"/>
<path d="M9.8,291.2 L44.5,289.3 L62.7,297.5 L88.2,303.6 L113.7,288.4 L121.0,287.5 L161.1,273.3 L190.3,285.7 L208.5,276.6 L210.0,276.6 L220.9,274.4 L251.9,290.3 L264.7,281.1 L284.7,273.3 L319.4,266.6 L341.2,271.1 L361.3,304.8 L374.1,309.0 L386.8,314.9 L410.5,300.3 L425.5,297.5 L441.9,310.9 L463.7,313.0 L482.0,300.3 L496.6,294.8 L514.8,281.1 L529.4,288.4 L554.9,299.9 L565.8,298.5 L587.7,288.4 L605.9,292.1 L613.2,299.4 L620.5,301.7 L630.0,302.5 L650.1,316.7 L670.1,318.5 L695.6,299.4 L706.6,294.4 L717.5,294.4 L732.1,298.5 L746.7,294.8 L768.5,285.3 L775.8,285.7 L797.7,278.8 L805.0,282.1 L819.6,291.2 L830.5,303.0" stroke="#16167a" stroke-width="1.2" fill="none"/>
<path d="M9.8,291.2 C12.6,291.0 20.8,290.6 26.2,290.3 C31.7,289.9 37.8,288.5 42.6,289.0 C47.5,289.4 50.5,291.9 55.4,293.0 C60.3,294.1 65.7,294.5 71.8,295.7 C77.9,296.9 84.9,301.0 91.8,300.3 C98.8,299.5 106.4,293.9 113.7,291.2 C121.0,288.4 127.4,286.5 135.6,283.9 C143.8,281.3 156.0,277.0 162.9,275.7 C169.9,274.3 172.1,274.8 177.5,275.7 C183.0,276.6 190.3,280.5 195.8,281.1 C201.2,281.7 204.9,280.3 210.0,279.3 C215.1,278.3 218.8,274.1 226.4,275.1 C234.0,276.2 246.2,285.6 255.6,285.7 C265.0,285.8 272.3,278.6 282.9,275.7 C293.5,272.8 309.6,269.4 319.4,268.4 C329.1,267.3 334.0,265.2 341.2,269.3 C348.5,273.4 354.6,286.3 363.1,293.0 C371.6,299.7 384.4,307.7 392.3,309.4 C400.2,311.1 405.9,304.3 410.5,303.0 C415.1,301.7 416.6,302.3 420.0,301.7 C423.4,301.2 423.3,298.4 430.9,299.9 C438.5,301.4 455.2,310.6 465.6,310.9 C475.9,311.1 483.5,305.5 492.9,301.2 C502.3,296.8 513.0,286.8 522.1,284.8 C531.2,282.8 540.3,287.5 547.6,289.3 C554.9,291.2 561.3,294.6 565.8,295.7 C570.4,296.9 570.4,297.2 574.9,296.3 C579.5,295.4 587.1,291.0 593.2,290.3 C599.2,289.6 605.3,290.6 611.4,292.1 C617.5,293.6 623.9,297.1 630.0,299.4 C636.1,301.6 640.9,302.9 648.2,305.7 C655.5,308.6 666.2,316.0 673.7,316.3 C681.3,316.6 687.1,310.9 693.8,307.6 C700.5,304.3 707.5,298.6 713.8,296.6 C720.2,294.7 726.3,296.0 732.1,295.7 C737.9,295.4 741.2,296.3 748.5,294.8 C755.8,293.3 766.4,288.9 775.8,286.6 C785.2,284.3 797.4,281.3 805.0,281.1 C812.6,281.0 816.8,283.6 821.4,285.7 C826.0,287.8 830.5,292.5 832.3,293.9" stroke="#ee1e1e" stroke-width="3.2" fill="none"/>
<path d="M9.8,291.2 C12.6,291.0 20.8,290.6 26.2,290.3 C31.7,289.9 37.8,288.5 42.6,289.0 C47.5,289.4 50.5,291.9 55.4,293.0 C60.3,294.1 65.7,294.5 71.8,295.7 C77.9,296.9 84.9,301.0 91.8,300.3 C98.8,299.5 106.4,293.9 113.7,291.2 C121.0,288.4 127.4,286.5 135.6,283.9 C143.8,281.3 156.0,277.0 162.9,275.7 C169.9,274.3 172.1,274.8 177.5,275.7 C183.0,276.6 190.3,280.5 195.8,281.1 C201.2,281.7 204.9,280.3 210.0,279.3 C215.1,278.3 218.8,274.1 226.4,275.1 C234.0,276.2 246.2,285.6 255.6,285.7 C265.0,285.8 272.3,278.6 282.9,275.7 C293.5,272.8 309.6,269.4 319.4,268.4 C329.1,267.3 334.0,265.2 341.2,269.3 C348.5,273.4 354.6,286.3 363.1,293.0 C371.6,299.7 384.4,307.7 392.3,309.4 C400.2,311.1 405.9,304.3 410.5,303.0 C415.1,301.7 416.6,302.3 420.0,301.7 C423.4,301.2 423.3,298.4 430.9,299.9 C438.5,301.4 455.2,310.6 465.6,310.9 C475.9,311.1 483.5,305.5 492.9,301.2 C502.3,296.8 513.0,286.8 522.1,284.8 C531.2,282.8 540.3,287.5 547.6,289.3 C554.9,291.2 561.3,294.6 565.8,295.7 C570.4,296.9 570.4,297.2 574.9,296.3 C579.5,295.4 587.1,291.0 593.2,290.3 C599.2,289.6 605.3,290.6 611.4,292.1 C617.5,293.6 623.9,297.1 630.0,299.4 C636.1,301.6 640.9,302.9 648.2,305.7 C655.5,308.6 666.2,316.0 673.7,316.3 C681.3,316.6 687.1,310.9 693.8,307.6 C700.5,304.3 707.5,298.6 713.8,296.6 C720.2,294.7 726.3,296.0 732.1,295.7 C737.9,295.4 741.2,296.3 748.5,294.8 C755.8,293.3 766.4,288.9 775.8,286.6 C785.2,284.3 797.4,281.3 805.0,281.1 C812.6,281.0 816.8,283.6 821.4,285.7 C826.0,287.8 830.5,292.5 832.3,293.9" stroke="#ff8080" stroke-width="1" fill="none" stroke-dasharray="1,2.5"/>
</g>
<text x="12.5" y="275" font-size="10.5" fill="#1c2a80" textLength="28" lengthAdjust="spacingAndGlyphs">MACD</text>
<text x="890" y="299.3" font-size="11" fill="#f2f2f2">-0.00</text>
<g clip-path="url(#crsi)">
<rect x="11" y="340.3" width="821" height="1.8" fill="#1a1ab8"/>
<rect x="11" y="340" width="17" height="2.5" fill="#3b414a" opacity="0.6"/>
<rect x="11" y="388.2" width="821" height="1.8" fill="#1a1ab8"/>
<path d="M10.7,356.1 L13.5,355.2 L20.8,365.2 L25.3,357.9 L30.8,366.1 L35.3,358.8 L46.3,374.3 L55.4,364.3 L60.9,376.1 L68.2,370.7 L73.6,377.0 L77.3,372.5 L88.2,385.2 L91.8,364.3 L99.1,359.7 L102.8,363.4 L106.4,357.0 L113.7,350.6 L117.4,354.3 L124.7,364.3 L128.3,354.3 L135.6,347.9 L142.9,345.1 L146.5,340.6 L153.8,335.1 L159.3,343.3 L164.8,349.7 L168.4,345.1 L172.1,354.3 L175.7,353.3 L186.6,367.9 L193.9,350.6 L197.6,352.4 L201.2,344.2 L208.5,342.4 L210.0,342.4 L213.6,344.2 L218.2,339.7 L222.8,349.7 L228.2,352.4 L232.8,364.3 L236.4,358.8 L243.7,370.7 L248.3,365.2 L251.9,369.7 L255.6,351.5 L259.2,347.9 L264.7,345.1 L268.3,348.8 L275.6,339.7 L280.2,347.0 L282.9,343.3 L287.5,352.4 L292.9,341.5 L295.7,344.2 L301.1,342.4 L306.6,343.3 L312.1,338.8 L320.3,331.5 L323.0,344.2 L326.7,353.3 L330.3,347.9 L337.6,343.3 L341.2,351.5 L344.9,377.0 L354.0,386.2 L359.5,386.2 L364.9,374.3 L368.6,378.0 L377.7,380.7 L385.0,378.9 L388.6,377.0 L392.3,368.8 L395.9,367.0 L401.4,368.8 L409.6,363.4 L414.2,371.6 L420.0,372.5 L422.7,369.7 L425.5,357.9 L428.2,378.0 L432.8,378.0 L436.4,384.3 L441.9,388.0 L446.4,378.0 L451.0,383.4 L458.3,382.5 L463.7,380.7 L470.1,362.5 L472.9,367.0 L478.3,362.5 L482.9,367.9 L486.5,361.5 L490.2,365.2 L494.7,355.2 L500.2,352.4 L507.5,347.9 L513.9,344.2 L517.5,349.7 L522.1,370.7 L525.7,364.3 L529.4,367.0 L536.7,361.5 L544.0,370.7 L549.4,374.3 L553.1,384.3 L555.8,369.7 L565.8,367.0 L571.3,365.2 L574.9,372.5 L578.6,353.3 L584.1,357.0 L591.3,362.5 L597.7,367.9 L602.3,358.8 L605.9,371.6 L613.2,381.6 L619.6,373.4 L623.2,376.1 L627.8,372.5 L630.0,374.3 L640.9,388.0 L646.4,393.4 L651.9,398.0 L656.4,390.7 L661.0,393.4 L664.6,389.8 L669.2,391.6 L673.7,377.0 L679.2,373.4 L684.7,367.0 L691.1,359.7 L696.5,365.2 L699.3,364.3 L704.7,351.5 L710.2,369.7 L716.6,363.4 L723.9,378.9 L729.3,371.6 L733.0,376.1 L735.7,361.5 L741.2,357.9 L749.4,366.1 L757.6,352.4 L765.8,349.7 L775.8,358.8 L780.4,355.2 L786.8,346.1 L791.3,340.6 L798.6,339.1 L803.2,361.5 L808.6,369.7 L815.9,366.1 L818.7,367.0 L821.4,378.0" stroke="#f0902a" stroke-width="1" fill="none"/>
<path clip-path="url(#chi)" d="M10.7,356.1 L13.5,355.2 L20.8,365.2 L25.3,357.9 L30.8,366.1 L35.3,358.8 L46.3,374.3 L55.4,364.3 L60.9,376.1 L68.2,370.7 L73.6,377.0 L77.3,372.5 L88.2,385.2 L91.8,364.3 L99.1,359.7 L102.8,363.4 L106.4,357.0 L113.7,350.6 L117.4,354.3 L124.7,364.3 L128.3,354.3 L135.6,347.9 L142.9,345.1 L146.5,340.6 L153.8,335.1 L159.3,343.3 L164.8,349.7 L168.4,345.1 L172.1,354.3 L175.7,353.3 L186.6,367.9 L193.9,350.6 L197.6,352.4 L201.2,344.2 L208.5,342.4 L210.0,342.4 L213.6,344.2 L218.2,339.7 L222.8,349.7 L228.2,352.4 L232.8,364.3 L236.4,358.8 L243.7,370.7 L248.3,365.2 L251.9,369.7 L255.6,351.5 L259.2,347.9 L264.7,345.1 L268.3,348.8 L275.6,339.7 L280.2,347.0 L282.9,343.3 L287.5,352.4 L292.9,341.5 L295.7,344.2 L301.1,342.4 L306.6,343.3 L312.1,338.8 L320.3,331.5 L323.0,344.2 L326.7,353.3 L330.3,347.9 L337.6,343.3 L341.2,351.5 L344.9,377.0 L354.0,386.2 L359.5,386.2 L364.9,374.3 L368.6,378.0 L377.7,380.7 L385.0,378.9 L388.6,377.0 L392.3,368.8 L395.9,367.0 L401.4,368.8 L409.6,363.4 L414.2,371.6 L420.0,372.5 L422.7,369.7 L425.5,357.9 L428.2,378.0 L432.8,378.0 L436.4,384.3 L441.9,388.0 L446.4,378.0 L451.0,383.4 L458.3,382.5 L463.7,380.7 L470.1,362.5 L472.9,367.0 L478.3,362.5 L482.9,367.9 L486.5,361.5 L490.2,365.2 L494.7,355.2 L500.2,352.4 L507.5,347.9 L513.9,344.2 L517.5,349.7 L522.1,370.7 L525.7,364.3 L529.4,367.0 L536.7,361.5 L544.0,370.7 L549.4,374.3 L553.1,384.3 L555.8,369.7 L565.8,367.0 L571.3,365.2 L574.9,372.5 L578.6,353.3 L584.1,357.0 L591.3,362.5 L597.7,367.9 L602.3,358.8 L605.9,371.6 L613.2,381.6 L619.6,373.4 L623.2,376.1 L627.8,372.5 L630.0,374.3 L640.9,388.0 L646.4,393.4 L651.9,398.0 L656.4,390.7 L661.0,393.4 L664.6,389.8 L669.2,391.6 L673.7,377.0 L679.2,373.4 L684.7,367.0 L691.1,359.7 L696.5,365.2 L699.3,364.3 L704.7,351.5 L710.2,369.7 L716.6,363.4 L723.9,378.9 L729.3,371.6 L733.0,376.1 L735.7,361.5 L741.2,357.9 L749.4,366.1 L757.6,352.4 L765.8,349.7 L775.8,358.8 L780.4,355.2 L786.8,346.1 L791.3,340.6 L798.6,339.1 L803.2,361.5 L808.6,369.7 L815.9,366.1 L818.7,367.0 L821.4,378.0" stroke="#d040e0" stroke-width="1" fill="none"/>
<path clip-path="url(#clo)" d="M10.7,356.1 L13.5,355.2 L20.8,365.2 L25.3,357.9 L30.8,366.1 L35.3,358.8 L46.3,374.3 L55.4,364.3 L60.9,376.1 L68.2,370.7 L73.6,377.0 L77.3,372.5 L88.2,385.2 L91.8,364.3 L99.1,359.7 L102.8,363.4 L106.4,357.0 L113.7,350.6 L117.4,354.3 L124.7,364.3 L128.3,354.3 L135.6,347.9 L142.9,345.1 L146.5,340.6 L153.8,335.1 L159.3,343.3 L164.8,349.7 L168.4,345.1 L172.1,354.3 L175.7,353.3 L186.6,367.9 L193.9,350.6 L197.6,352.4 L201.2,344.2 L208.5,342.4 L210.0,342.4 L213.6,344.2 L218.2,339.7 L222.8,349.7 L228.2,352.4 L232.8,364.3 L236.4,358.8 L243.7,370.7 L248.3,365.2 L251.9,369.7 L255.6,351.5 L259.2,347.9 L264.7,345.1 L268.3,348.8 L275.6,339.7 L280.2,347.0 L282.9,343.3 L287.5,352.4 L292.9,341.5 L295.7,344.2 L301.1,342.4 L306.6,343.3 L312.1,338.8 L320.3,331.5 L323.0,344.2 L326.7,353.3 L330.3,347.9 L337.6,343.3 L341.2,351.5 L344.9,377.0 L354.0,386.2 L359.5,386.2 L364.9,374.3 L368.6,378.0 L377.7,380.7 L385.0,378.9 L388.6,377.0 L392.3,368.8 L395.9,367.0 L401.4,368.8 L409.6,363.4 L414.2,371.6 L420.0,372.5 L422.7,369.7 L425.5,357.9 L428.2,378.0 L432.8,378.0 L436.4,384.3 L441.9,388.0 L446.4,378.0 L451.0,383.4 L458.3,382.5 L463.7,380.7 L470.1,362.5 L472.9,367.0 L478.3,362.5 L482.9,367.9 L486.5,361.5 L490.2,365.2 L494.7,355.2 L500.2,352.4 L507.5,347.9 L513.9,344.2 L517.5,349.7 L522.1,370.7 L525.7,364.3 L529.4,367.0 L536.7,361.5 L544.0,370.7 L549.4,374.3 L553.1,384.3 L555.8,369.7 L565.8,367.0 L571.3,365.2 L574.9,372.5 L578.6,353.3 L584.1,357.0 L591.3,362.5 L597.7,367.9 L602.3,358.8 L605.9,371.6 L613.2,381.6 L619.6,373.4 L623.2,376.1 L627.8,372.5 L630.0,374.3 L640.9,388.0 L646.4,393.4 L651.9,398.0 L656.4,390.7 L661.0,393.4 L664.6,389.8 L669.2,391.6 L673.7,377.0 L679.2,373.4 L684.7,367.0 L691.1,359.7 L696.5,365.2 L699.3,364.3 L704.7,351.5 L710.2,369.7 L716.6,363.4 L723.9,378.9 L729.3,371.6 L733.0,376.1 L735.7,361.5 L741.2,357.9 L749.4,366.1 L757.6,352.4 L765.8,349.7 L775.8,358.8 L780.4,355.2 L786.8,346.1 L791.3,340.6 L798.6,339.1 L803.2,361.5 L808.6,369.7 L815.9,366.1 L818.7,367.0 L821.4,378.0" stroke="#30d030" stroke-width="1" fill="none"/>
</g>
<rect x="11" y="331" width="18" height="10" fill="#3b414a"/>
<text x="12" y="340.5" font-size="11" fill="#e89040" textLength="15.5" lengthAdjust="spacingAndGlyphs">RSI</text>
<text x="890.5" y="371.5" font-size="11" fill="#f2f2f2">50</text>
<rect x="11.5" y="378.5" width="61.5" height="19" rx="2" fill="#5c6b7e" stroke="#b8ccd8"/>
<rect x="11" y="378" width="2" height="27" fill="#d4eee6"/>
<text x="20.2" y="392.3" font-size="11" fill="#f4f4f4" textLength="45" lengthAdjust="spacingAndGlyphs">Фев 2021</text>
<rect x="365.0" y="378.5" width="63" height="19" rx="2" fill="#5c6b7e" stroke="#b8ccd8"/>
<rect x="364.5" y="378" width="2" height="27" fill="#d4eee6"/>
<text x="372.7" y="392.3" font-size="11" fill="#f4f4f4" textLength="48.6" lengthAdjust="spacingAndGlyphs">Мар 2021</text>
<rect x="780.0" y="378.5" width="61.5" height="19" rx="2" fill="#5c6b7e" stroke="#b8ccd8"/>
<rect x="779.5" y="378" width="2" height="27" fill="#d4eee6"/>
<text x="787.4" y="392.3" font-size="11" fill="#f4f4f4" textLength="47.8" lengthAdjust="spacingAndGlyphs">Апр 2021</text>
<text x="31.4" y="424" font-size="11" fill="#f4f4f4" text-anchor="middle">1</text>
<text x="114.4" y="424" font-size="11" fill="#f4f4f4" text-anchor="middle">8</text>
<text x="197.5" y="424" font-size="11" fill="#f4f4f4" text-anchor="middle">15</text>
<text x="280.5" y="424" font-size="11" fill="#f4f4f4" text-anchor="middle">22</text>
<text x="363.5" y="424" font-size="11" fill="#f4f4f4" text-anchor="middle">1</text>
<text x="446.6" y="424" font-size="11" fill="#f4f4f4" text-anchor="middle">8</text>
<text x="529.6" y="424" font-size="11" fill="#f4f4f4" text-anchor="middle">15</text>
<text x="612.6" y="424" font-size="11" fill="#f4f4f4" text-anchor="middle">22</text>
<text x="695.6" y="424" font-size="11" fill="#f4f4f4" text-anchor="middle">29</text>
<text x="778.7" y="424" font-size="11" fill="#f4f4f4" text-anchor="middle">5</text>
</svg></body></html>
